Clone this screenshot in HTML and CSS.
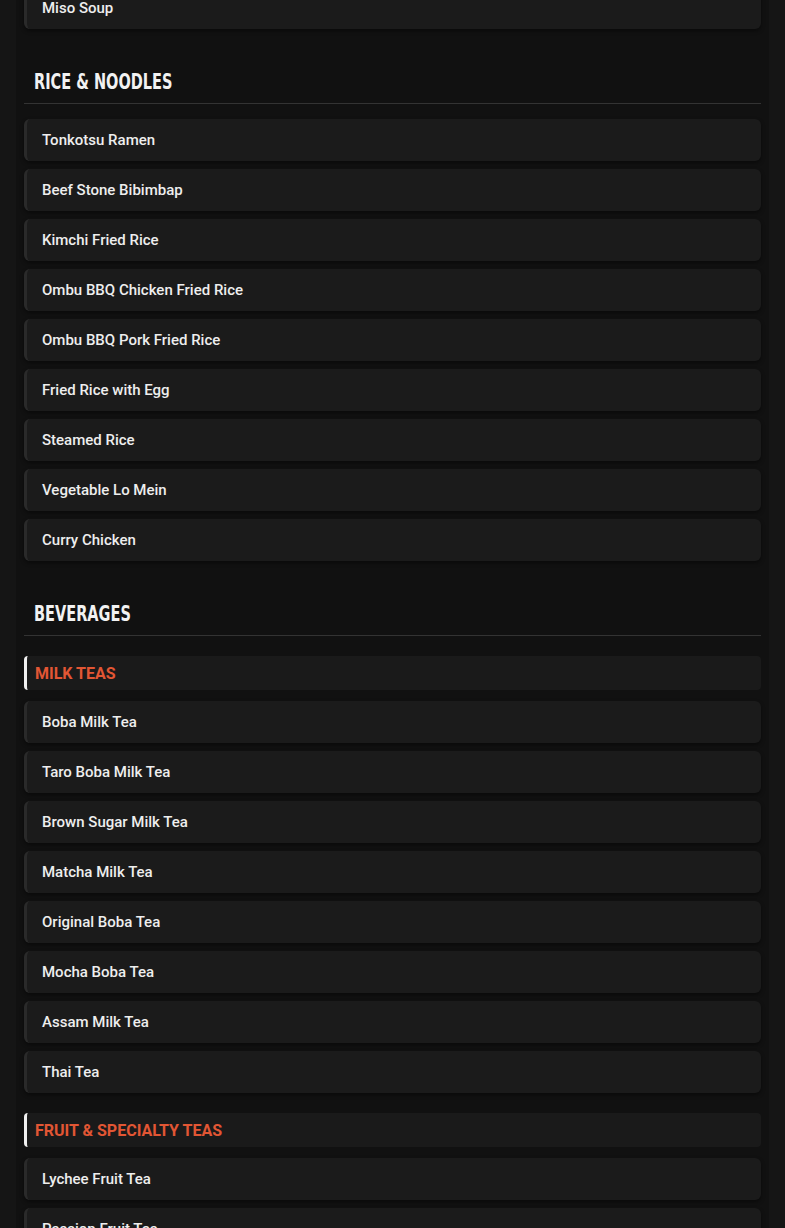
FILE: index.html
```html
<!DOCTYPE html>
<html lang="en">
<head>
<meta charset="utf-8">
<title>Menu</title>
<link rel="stylesheet" href="styles.css">
</head>
<body>
<main class="menu">
  <section class="section first">
    <ul class="items">
      <li class="item">Miso Soup</li>
    </ul>
  </section>

  <section class="section">
    <h2 class="section-title"><span class="title-text">Rice &amp; Noodles</span></h2>
    <ul class="items">
      <li class="item">Tonkotsu Ramen</li>
      <li class="item">Beef Stone Bibimbap</li>
      <li class="item">Kimchi Fried Rice</li>
      <li class="item">Ombu BBQ Chicken Fried Rice</li>
      <li class="item">Ombu BBQ Pork Fried Rice</li>
      <li class="item">Fried Rice with Egg</li>
      <li class="item">Steamed Rice</li>
      <li class="item">Vegetable Lo Mein</li>
      <li class="item">Curry Chicken</li>
    </ul>
  </section>

  <section class="section">
    <h2 class="section-title"><span class="title-text">Beverages</span></h2>
    <ul class="items">
      <li class="subcat">Milk Teas</li>
      <li class="item">Boba Milk Tea</li>
      <li class="item">Taro Boba Milk Tea</li>
      <li class="item">Brown Sugar Milk Tea</li>
      <li class="item">Matcha Milk Tea</li>
      <li class="item">Original Boba Tea</li>
      <li class="item">Mocha Boba Tea</li>
      <li class="item">Assam Milk Tea</li>
      <li class="item">Thai Tea</li>
      <li class="subcat">Fruit &amp; Specialty Teas</li>
      <li class="item">Lychee Fruit Tea</li>
      <li class="item">Passion Fruit Tea</li>
    </ul>
  </section>
</main>
</body>
</html>
```

FILE: styles.css
```css
html, body {
  margin: 0;
  padding: 0;
  background: #151515;
  height: 100%;
  overflow: hidden;
}

body {
  font-family: Roboto, "Liberation Sans", sans-serif;
  color: #eeeeee;
}

.menu {
  margin: 0 16px;
  padding: 0 8px;
  background: #111111;
  min-height: 100%;
}

.section {
  margin-top: 38px;
}

.section.first {
  margin-top: 0;
}

.section.first .items {
  margin-top: -13px;
}

.section-title {
  margin: 0 0 15px;
  padding: 0 10px 7px;
  border-bottom: 1px solid #333333;
  font-family: "DejaVu Sans", "Liberation Sans", sans-serif;
  font-weight: 700;
  font-size: 22px;
  line-height: 28px;
  text-transform: uppercase;
  color: #f2f2f2;
}

.title-text {
  display: inline-block;
  transform: scaleX(0.66);
  transform-origin: left center;
  padding-top: 1px;
  margin-bottom: -1px;
}

.items {
  list-style: none;
  margin: 0;
  padding: 0;
  display: flex;
  flex-direction: column;
  gap: 8px;
}

.item {
  height: 42px;
  display: flex;
  align-items: center;
  padding-left: 15px;
  background: #1b1b1b;
  border-left: 3px solid #2a2a2a;
  border-radius: 6px;
  box-shadow: 0 2px 4px rgba(0, 0, 0, 0.45);
  font-size: 15px;
  font-weight: 500;
  color: #eeeeee;
}

.subcat {
  height: 34px;
  margin-top: 12px;
  margin-bottom: 3px;
  display: flex;
  align-items: center;
  padding-left: 8px;
  padding-top: 1px;
  box-sizing: border-box;
  background: #1a1a1a;
  border-left: 3px solid #f0f0f0;
  border-radius: 4px;
  font-size: 16px;
  font-weight: 700;
  text-transform: uppercase;
  color: #e25634;
}

.subcat:first-child {
  margin-top: 5px;
}
```
